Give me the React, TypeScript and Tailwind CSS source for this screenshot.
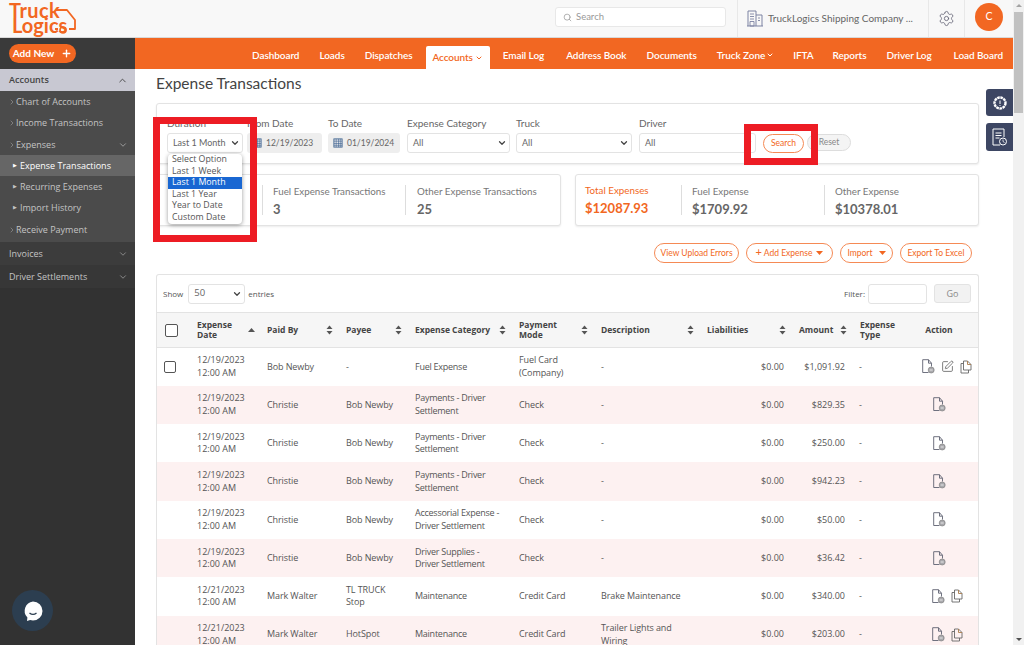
import { ChevronDown, ChevronUp, ChevronRight, Search, Settings, SquarePen, Plus } from 'lucide-react';

const NAV = [
  { label: 'Dashboard', cls: '' },
  { label: 'Loads', cls: '' },
  { label: 'Dispatches', cls: '' },
  { label: 'Accounts', cls: '' },
  { label: 'Email Log', cls: '' },
  { label: 'Address Book', cls: 'ml-[2px]' },
  { label: 'Documents', cls: '' },
  { label: 'Truck Zone', cls: 'mr-[-1px]' },
  { label: 'IFTA', cls: 'mr-[-1px]' },
  { label: 'Reports', cls: '' },
  { label: 'Driver Log', cls: '' },
  { label: 'Load Board', cls: 'ml-[2px]' },
];

const SIDE_SUB = [
  { label: 'Chart of Accounts', h: 'h-[21px]' },
  { label: 'Income Transactions', h: 'h-[22px]' },
];

const ROWS = [
  { date: '12/19/2023', paid: 'Bob Newby', payee: '-', cat: 'Fuel Expense', mode: 'Fuel Card (Company)', desc: '-', amount: '$1,091.92', first: true },
  { date: '12/19/2023', paid: 'Christie', payee: 'Bob Newby', cat: 'Payments - Driver Settlement', mode: 'Check', desc: '-', amount: '$829.35' },
  { date: '12/19/2023', paid: 'Christie', payee: 'Bob Newby', cat: 'Payments - Driver Settlement', mode: 'Check', desc: '-', amount: '$250.00' },
  { date: '12/19/2023', paid: 'Christie', payee: 'Bob Newby', cat: 'Payments - Driver Settlement', mode: 'Check', desc: '-', amount: '$942.23' },
  { date: '12/19/2023', paid: 'Christie', payee: 'Bob Newby', cat: 'Accessorial Expense - Driver Settlement', mode: 'Check', desc: '-', amount: '$50.00' },
  { date: '12/19/2023', paid: 'Christie', payee: 'Bob Newby', cat: 'Driver Supplies - Driver Settlement', mode: 'Check', desc: '-', amount: '$36.42' },
  { date: '12/21/2023', paid: 'Mark Walter', payee: 'TL TRUCK Stop', cat: 'Maintenance', mode: 'Credit Card', desc: 'Brake Maintenance', amount: '$340.00', copy: true },
  { date: '12/21/2023', paid: 'Mark Walter', payee: 'HotSpot', cat: 'Maintenance', mode: 'Credit Card', desc: 'Trailer Lights and Wiring', amount: '$203.00', copy: true },
];

function SortIcon() {
  return (
    <svg width="7" height="10" viewBox="0 0 7 10" className="shrink-0 fill-[#555]">
      <path d="M3.5 0.5 6.5 4H.5z" />
      <path d="M3.5 9.5 .5 6h6z" />
    </svg>
  );
}

function FileIcon() {
  return (
    <svg width="13" height="15" viewBox="0 0 13 15" fill="none" className="shrink-0">
      <path d="M6.500 13.500H.7V.7h5.800l3 3.500V7.500M6.500.7v3.500h3" stroke="#5f6272" strokeWidth="0.9" />
      <circle cx="9.200" cy="11" r="3" fill="#a9a9ad" stroke="#777" strokeWidth="0.6" />
      <path d="M7.700 11h3" stroke="#fff" strokeWidth="0.7" />
    </svg>
  );
}

function CopyIcon() {
  return (
    <svg width="12" height="14" viewBox="0 0 12 14" fill="none" className="shrink-0">
      <path d="M1 3.500h2.500M1 3.500V13h7.500V10" stroke="#666" strokeWidth="0.9" />
      <path d="M3.500 1h4L11 4.500V10H3.500z" stroke="#666" strokeWidth="0.9" />
      <path d="M7.500 1v3.500H11" stroke="#a87a4a" strokeWidth="0.9" />
    </svg>
  );
}

function Logo() {
  return (
    <div className="relative h-[37px] w-[135px] pl-[9px] pt-[3px] font-['Lato',sans-serif] text-[#f26722]">
      <div className="text-[20px] font-bold leading-[15px] tracking-[0.4px]">Truck</div>
      <div className="pl-[3px] text-[20px] font-bold leading-[15px]">Logics</div>
      <svg width="78" height="35" viewBox="0 0 78 35" fill="none" className="absolute left-0 top-0">
        <path d="M56 10h11l8 10v9h-6M58 29h-3" stroke="#f26722" strokeWidth="1.800" strokeLinejoin="round" />
        <circle cx="63" cy="30" r="3" stroke="#f26722" strokeWidth="1.600" />
      </svg>
    </div>
  );
}

function Sidebar() {
  return (
    <aside className="flex w-[135px] shrink-0 flex-col bg-[#323232] font-['Open_Sans',sans-serif] text-[9px] text-[#c4c4c4]">
      <div className="flex h-[31px] items-center bg-[#3a3a3a] pl-[9px]">
        <div className="flex h-[19px] w-[67px] items-center justify-center gap-[7px] rounded-full bg-[#f26722] font-['Lato',sans-serif] text-[10px] font-bold text-white">
          Add New <Plus size={11} strokeWidth={3} />
        </div>
      </div>
      <div className="flex h-[22px] items-center justify-between bg-[#c8c8d2] pl-[9px] pr-[7px] font-semibold text-[#444]">
        Accounts <ChevronUp size={11} />
      </div>
      <div className="bg-[#4b4b4b]">
        {SIDE_SUB.map((s) => (
          <div key={s.label} className={`flex items-center pl-[8px] ${s.h}`}>
            <ChevronRight size={8} className="text-[#999]" />
            {s.label}
          </div>
        ))}
        <div className="flex h-[21px] items-center pl-[8px] pr-[7px]">
          <ChevronRight size={8} className="text-[#999]" />
          Expenses
          <ChevronDown size={10} className="ml-auto text-[#aaa]" />
        </div>
        <div className="flex h-[21px] items-center gap-[3px] bg-[#666] pl-[13px] font-medium text-white">
          <span className="text-[5px]">▶</span>Expense Transactions
        </div>
        <div className="flex h-[21px] items-center gap-[3px] pl-[13px]">
          <span className="text-[5px]">▶</span>Recurring Expenses
        </div>
        <div className="flex h-[21px] items-center gap-[3px] pl-[13px]">
          <span className="text-[5px]">▶</span>Import History
        </div>
        <div className="flex h-[24px] items-center pl-[8px]">
          <ChevronRight size={8} className="text-[#999]" />
          Receive Payment
        </div>
      </div>
      <div className="flex h-[23px] items-center justify-between bg-[#3c3c3c] pl-[9px] pr-[7px]">
        Invoices <ChevronDown size={10} className="text-[#999]" />
      </div>
      <div className="flex h-[23px] items-center justify-between bg-[#373737] pl-[9px] pr-[7px]">
        Driver Settlements <ChevronDown size={10} className="text-[#999]" />
      </div>
    </aside>
  );
}

function FilterSelect({ label, value, className }: { label: string; value: string; className: string }) {
  return (
    <div className={className}>
      <div className="mb-[3px] h-[13px] text-[10px] leading-[13px] text-[#666]">{label}</div>
      <div className="flex h-[20px] items-center justify-between rounded-[3px] border border-[#e3e3e3] bg-white pl-[5px] pr-[2px] text-[9px] text-[#666]">
        {value}
        <ChevronDown size={10} strokeWidth={3} className="text-[#444]" />
      </div>
    </div>
  );
}

function DateField({ label, value, className }: { label: string; value: string; className: string }) {
  return (
    <div className={className}>
      <div className="mb-[3px] h-[13px] text-[10px] leading-[13px] text-[#666]">{label}</div>
      <div className="flex h-[20px] items-center gap-[4px] rounded-[3px] bg-[#eeeeee] pl-[5px] text-[8.5px] text-[#666]">
        <svg width="10" height="10" viewBox="0 0 11 11" fill="none" className="shrink-0" stroke="#3f6491" strokeWidth="1">
          <rect x="1" y="1" width="9" height="9" />
          <path d="M1 3.500h9M1 6h9M1 8h9M3.500 1v9M6 1v9M8 1v9" strokeWidth="0.7" />
        </svg>
        {value}
      </div>
    </div>
  );
}

function Stat({ label, value, accent, className }: { label: string; value: string; accent?: boolean; className: string }) {
  return (
    <div className={className}>
      <div className={`text-[9.8px] leading-[13px] ${accent ? 'text-[#f26722]' : 'text-[#777]'}`}>{label}</div>
      <div className={`mt-[3px] text-[13px] font-bold leading-[16px] ${accent ? 'text-[#f26722]' : 'text-[#666]'}`}>{value}</div>
    </div>
  );
}

function OutlineButton({ className, children }: { className: string; children: React.ReactNode }) {
  return (
    <button className={`flex h-[20px] items-center justify-center rounded-full border border-[#f58a55] bg-white text-[8.5px] text-[#f26722] ${className}`}>
      {children}
    </button>
  );
}

function Caret() {
  return (
    <svg width="7" height="4" viewBox="0 0 7 4" className="fill-[#f26722]">
      <path d="M0 0h7L3.500 4z" />
    </svg>
  );
}

function HeadCell({ children, sort = true }: { children: React.ReactNode; sort?: boolean }) {
  return (
    <th className="pl-[10px] pr-[3px] text-left font-bold">
      <div className="flex items-center justify-between gap-[2px]">
        <span className="leading-[10px]">{children}</span>
        {sort && <SortIcon />}
      </div>
    </th>
  );
}

function ExpenseTable() {
  return (
    <div className="rounded-t-[3px] border border-b-0 border-[#e3e3e3] bg-white font-['Open_Sans',sans-serif]">
      <div className="flex h-[37px] items-center justify-between pl-[6px] pr-[7px] text-[8px] text-[#555]">
        <div className="flex items-center gap-[3px]">
          Show
          <div className="ml-[2px] flex h-[20px] w-[57px] items-center justify-between rounded-[3px] border border-[#e3e3e3] pl-[5px] pr-[2px] text-[9.5px] text-[#666]">
            50 <ChevronDown size={10} strokeWidth={3} className="text-[#444]" />
          </div>
          entries
        </div>
        <div className="flex items-center gap-[3px]">
          Filter:
          <div className="h-[20px] w-[59px] rounded-[3px] border border-[#e3e3e3] bg-white" />
          <button className="ml-[4px] h-[19px] w-[37px] rounded-[3px] border border-[#e3e3e3] bg-[#f2f2f2] text-[9px] text-[#888]">Go</button>
        </div>
      </div>
      <table className="w-full table-fixed border-collapse text-[9px] text-[#555]">
        <colgroup>
          <col className="w-[30px]" />
          <col className="w-[70px]" />
          <col className="w-[79px]" />
          <col className="w-[69px]" />
          <col className="w-[104px]" />
          <col className="w-[82px]" />
          <col className="w-[106px]" />
          <col className="w-[92px]" />
          <col className="w-[61px]" />
          <col className="w-[50px]" />
          <col />
        </colgroup>
        <thead>
          <tr className="h-[35px] border-y border-[#e3e3e3] bg-[#f6f6f6] text-[8.5px] text-[#444]">
            <th className="pl-[8px] text-left">
              <div className="h-[13px] w-[13px] rounded-[2px] border border-[#555] bg-white" />
            </th>
            <th className="pl-[10px] pr-[2px] text-left font-bold">
              <div className="flex items-center justify-between">
                <span className="w-[40px] leading-[10px]">Expense Date</span>
                <svg width="7" height="4" viewBox="0 0 7 4" className="shrink-0 fill-[#555]">
                  <path d="M3.500 0 7 4H0z" />
                </svg>
              </div>
            </th>
            <HeadCell>Paid By</HeadCell>
            <HeadCell>Payee</HeadCell>
            <HeadCell>Expense Category</HeadCell>
            <HeadCell>Payment Mode</HeadCell>
            <HeadCell>Description</HeadCell>
            <HeadCell>Liabilities</HeadCell>
            <HeadCell>Amount</HeadCell>
            <HeadCell sort={false}>Expense Type</HeadCell>
            <th className="text-center font-bold">Action</th>
          </tr>
        </thead>
        <tbody>
          {ROWS.map((r, i) => (
            <tr key={i} className={`h-[38.3px] leading-[12.5px] ${i % 2 === 1 ? 'bg-[#fdf1f1]' : 'bg-white'}`}>
              <td className="pl-[7px]">
                {r.first && <div className="h-[12px] w-[12px] rounded-[2px] border border-[#555]" />}
              </td>
              <td className="pl-[10px] whitespace-pre-line">{`${r.date}\n12:00 AM`}</td>
              <td className="pl-[10px] tracking-[-0.1px]">{r.paid}</td>
              <td className="pl-[10px] pr-[8px] tracking-[-0.1px]">{r.payee}</td>
              <td className="pl-[10px] pr-[5px] tracking-[-0.25px]">{r.cat}</td>
              <td className="pl-[10px] pr-[8px] tracking-[-0.1px]">{r.mode}</td>
              <td className="pl-[10px] pr-[8px] tracking-[-0.1px]">{r.desc}</td>
              <td className="pr-[5px] text-right">$0.00</td>
              <td className="pr-[5px] text-right">{r.amount}</td>
              <td className="pl-[9px]">-</td>
              <td>
                <div className={`flex items-center justify-center gap-[6px] ${r.first || r.copy ? 'pl-[16px]' : ''}`}>
                  <FileIcon />
                  {r.first && <SquarePen size={13} strokeWidth={1.4} className="text-[#555]" />}
                  {(r.first || r.copy) && <CopyIcon />}
                </div>
              </td>
            </tr>
          ))}
        </tbody>
      </table>
    </div>
  );
}

export default function App() {
  return (
    <div className="relative flex h-[645px] w-[1024px] overflow-hidden bg-white font-['Lato',sans-serif]">
      <div className="flex w-[1013px] shrink-0 flex-col">
        {/* Top header */}
        <header className="flex h-[38px] shrink-0 items-stretch border-b border-[#d9d9d9] bg-[#f8f8f8]">
          <Logo />
          <div className="ml-[420px] mt-[7px] flex h-[20px] w-[171px] items-center gap-[4px] rounded-[3px] border border-[#e8e8e8] bg-white pl-[7px] text-[9.5px] text-[#999]">
            <Search size={9} /> Search
          </div>
          <div className="ml-[11px] flex w-[192px] items-center gap-[5px] border-x border-[#e8e8e8] pl-[9px] text-[10px] text-[#666]">
            <svg width="16" height="17" viewBox="0 0 16 17" fill="none" stroke="#7d83a3" strokeWidth="1" className="shrink-0">
              <path d="M1 16V1h8v15M9 5h6v11M0 16h16" />
              <path d="M3 4h4M3 6.500h4M3 9h4M11 8h2M11 10.500h2M3 11.500h4v4.500H3z" strokeWidth="0.9" />
            </svg>
            TruckLogics Shipping Company ...
          </div>
          <div className="flex w-[36px] items-center justify-center border-r border-[#e8e8e8]">
            <Settings size={17} strokeWidth={1.2} className="text-[#667]" />
          </div>
          <div className="ml-[10px] mt-[3px] flex h-[28px] w-[28px] items-center justify-center rounded-full bg-[#f26722] text-[10.5px] text-white">C</div>
        </header>

        <div className="flex min-h-0 flex-1">
          <Sidebar />
          <div className="min-w-0 flex-1">
            {/* Orange nav */}
            <nav className="flex h-[31px] items-end justify-end gap-[20px] bg-[#f26722] pr-[10px] text-[10px] font-semibold tracking-[-0.07px] text-white">
              {NAV.map((n) =>
                n.label === 'Accounts' ? (
                  <div key={n.label} className="mx-[-7px] flex h-[23px] w-[64px] items-center justify-center gap-[2px] rounded-t-[2px] bg-white text-[#f26722]">
                    {n.label} <ChevronDown size={8} strokeWidth={3} />
                  </div>
                ) : (
                  <div key={n.label} className={`flex h-[31px] items-center gap-[1px] pt-[3px] ${n.cls}`}>
                    {n.label}
                    {n.label === 'Truck Zone' && <ChevronDown size={8} strokeWidth={3} />}
                  </div>
                ),
              )}
            </nav>

            <main className="pl-[21px] pr-[34px]">
              <h1 className="mt-[5px] h-[18px] text-[15.5px] leading-[18px] text-[#444]">Expense Transactions</h1>

              {/* Filters */}
              <section className="mt-[11px] flex h-[61px] rounded-[3px] border border-[#e3e3e3] bg-white pl-[10px] pt-[13px] shadow-[0_1px_2px_rgba(0,0,0,0.08)]">
                <FilterSelect label="Duration" value="Last 1 Month" className="w-[76px]" />
                <DateField label="From Date" value="12/19/2023" className="ml-[4px] w-[75px]" />
                <DateField label="To Date" value="01/19/2024" className="ml-[6px] w-[72px]" />
                <FilterSelect label="Expense Category" value="All" className="ml-[7px] w-[103px]" />
                <FilterSelect label="Truck" value="All" className="ml-[6px] w-[116px]" />
                <FilterSelect label="Driver" value="All" className="ml-[7px] w-[117px]" />
                <button className="ml-[7px] mt-[17px] h-[19px] w-[41px] rounded-full border border-[#f58a55] bg-white text-[8.5px] text-[#f26722]">Search</button>
                <button className="ml-[3px] mt-[17px] h-[17px] w-[44px] rounded-full border border-[#ddd] bg-[#f4f4f4] text-[8.5px] text-[#888]">Reset</button>
              </section>

              {/* Totals */}
              <section className="mt-[10px] flex gap-[14px]">
                <div className="flex h-[52px] w-[405px] items-center rounded-[3px] border border-[#e3e3e3] bg-white shadow-[0_1px_2px_rgba(0,0,0,0.08)]">
                  {/* first figure sits behind the open dropdown and the red frame */}
                  <div className="w-[105px]" />
                  <Stat label="Fuel Expense Transactions" value="3" className="h-[30px] w-[143px] border-l border-[#ddd] pl-[10px]" />
                  <Stat label="Other Expense Transactions" value="25" className="h-[30px] border-l border-[#ddd] pl-[11px]" />
                </div>
                <div className="flex h-[52px] flex-1 items-center rounded-[3px] border border-[#e3e3e3] bg-white shadow-[0_1px_2px_rgba(0,0,0,0.08)]">
                  <Stat label="Total Expenses" value="$12087.93" accent className="w-[105px] pl-[9px]" />
                  <Stat label="Fuel Expense" value="$1709.92" className="h-[30px] w-[143px] border-l border-[#ddd] pl-[10px]" />
                  <Stat label="Other Expense" value="$10378.01" className="h-[30px] border-l border-[#ddd] pl-[10px]" />
                </div>
              </section>

              {/* Actions */}
              <div className="mt-[17px] flex justify-end gap-[7px] pr-[7px]">
                <OutlineButton className="w-[85px]">View Upload Errors</OutlineButton>
                <OutlineButton className="w-[87px] gap-[4px]">
                  <span><span className="text-[11px] leading-none">+</span> Add Expense</span> <Caret />
                </OutlineButton>
                <OutlineButton className="w-[53px] gap-[6px]">Import <Caret /></OutlineButton>
                <OutlineButton className="w-[72px]">Export To Excel</OutlineButton>
              </div>

              <div className="mt-[11px]">
                <ExpenseTable />
              </div>
            </main>
          </div>
        </div>
      </div>

      {/* Scrollbar */}
      <div className="flex flex-1 flex-col items-center bg-[#f1f1f1]">
        <div className="mt-[4px] h-0 w-0 border-x-[3px] border-b-[3px] border-x-transparent border-b-[#a3a3a3]" />
        <div className="mt-[5px] h-[101px] w-[9px] bg-[#c1c1c1]" />
        <div className="mb-[4px] mt-auto h-0 w-0 border-x-[3px] border-t-[3px] border-x-transparent border-t-[#505050]" />
      </div>

      {/* Duration dropdown */}
      <div className="absolute left-[168px] top-[154px] w-[74px] overflow-hidden rounded-[4px] bg-white font-['Open_Sans',sans-serif] text-[8.8px] leading-[11.6px] text-[#555] shadow-[0_1px_4px_rgba(0,0,0,0.4)]">
        <div className="pl-[4px]">Select Option</div>
        <div className="pl-[4px]">Last 1 Week</div>
        <div className="bg-[#1967d2] pl-[4px] text-white">Last 1 Month</div>
        <div className="pl-[4px]">Last 1 Year</div>
        <div className="pl-[4px]">Year to Date</div>
        <div className="pl-[4px]">Custom Date</div>
      </div>

      {/* Red annotations */}
      <div className="pointer-events-none absolute left-[153px] top-[117px] h-[125px] w-[104px] border-[7px] border-[#ed1c24]" />
      <div className="pointer-events-none absolute left-[744px] top-[124px] h-[41px] w-[74px] border-[7px] border-[#ed1c24]" />

      {/* Floating side buttons */}
      <div className="absolute left-[986px] top-[89px] flex h-[27px] w-[27px] items-center justify-center rounded-l-[3px] bg-[#3d4663]">
        <svg width="16" height="16" viewBox="0 0 16 16" fill="none">
          <circle cx="8" cy="8" r="5.500" stroke="#fff" strokeWidth="2.400" strokeDasharray="2.600 0.600" />
          <path d="M8 5.500v3.500M8 10v1" stroke="#fff" strokeWidth="1" />
        </svg>
      </div>
      <div className="absolute left-[986px] top-[123px] flex h-[28px] w-[27px] items-center justify-center rounded-l-[3px] bg-[#3d4663]">
        <svg width="17" height="19" viewBox="0 0 17 19" fill="none" stroke="#fff" strokeWidth="1">
          <path d="M9 17H2V1h11v8" />
          <path d="M4.500 5h6M4.500 7.500h6M4.500 10h4" />
          <circle cx="12" cy="13.500" r="3.500" />
          <path d="M12 11.500v2l1.500 1" strokeWidth="0.8" />
        </svg>
      </div>

      {/* Chat bubble */}
      <div className="absolute left-[12px] top-[590px] flex h-[41px] w-[41px] items-center justify-center rounded-full bg-[#2c3e50]">
        <svg width="22" height="22" viewBox="0 0 22 22">
          <path d="M11 1.500a9.500 9.500 0 0 1 0 19c-1 0-2-.1-2.900-.4L5 21l.4-3.400A9.500 9.500 0 0 1 11 1.500z" fill="#fff" />
          <path d="M7.500 13c2 1.600 5 1.600 7 0" stroke="#2c3e50" strokeWidth="1.400" fill="none" />
        </svg>
      </div>
    </div>
  );
}
